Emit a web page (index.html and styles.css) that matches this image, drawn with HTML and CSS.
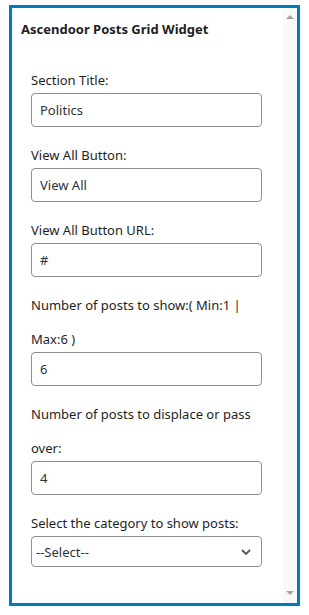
FILE: index.html
```html
<!DOCTYPE html>
<html lang="en">
<head>
    <meta charset="UTF-8">
    <meta name="viewport" content="width=device-width, initial-scale=1.0">
    <title>Ascendoor Posts Grid Widget</title>
    <link rel="stylesheet" href="styles.css">
</head>
<body>
    <div class="widget">
        <div class="content">
            <h3 class="widget-title">Ascendoor Posts Grid Widget</h3>
            <div class="form">
                <div class="field">
                    <label>Section Title:</label>
                    <input type="text" value="Politics">
                </div>
                <div class="field">
                    <label>View All Button:</label>
                    <input type="text" value="View All">
                </div>
                <div class="field">
                    <label>View All Button URL:</label>
                    <input type="text" value="#">
                </div>
                <div class="field">
                    <label>Number of posts to show:( Min:1 | Max:6 )</label>
                    <input type="text" value="6">
                </div>
                <div class="field">
                    <label>Number of posts to displace or pass over:</label>
                    <input type="text" value="4">
                </div>
                <div class="field">
                    <label>Select the category to show posts:</label>
                    <div class="select-box">
                        <span>--Select--</span>
                        <svg width="14" height="14" viewBox="0 0 14 14">
                            <path d="M3 5 L7 9 L11 5" fill="none" stroke="#50575e" stroke-width="1.8"/>
                        </svg>
                    </div>
                </div>
            </div>
        </div>
        <!-- fake scrollbar -->
        <div class="scrollbar">
            <span class="arrow up"></span>
            <span class="arrow down"></span>
        </div>
    </div>
</body>
</html>
```

FILE: styles.css
```css
body {
    margin: 0;
    font-family: 'Noto Sans', 'Open Sans', sans-serif;
    font-size: 13px;
    color: #1e1e1e;
    background: white;
}
.widget {
    display: flex;
    width: 285px;
    height: 595px;
    margin: 5px 0 0 9px;
    border: 3px solid #007cba;
    background: white;
}
.content {
    flex: 1;
    padding: 11px 0 0 9px;
}
.widget-title {
    margin: 0;
    font-size: 13px;
    font-weight: 700;
    line-height: 20px;
}
.form {
    margin-top: 24px;
    padding-left: 10px;
    width: 231px;
}
.field {
    margin-bottom: 11px;
}
.field label {
    display: block;
    line-height: 34px;
    margin-bottom: -4px;
}
.field input {
    display: block;
    box-sizing: border-box;
    width: 231px;
    height: 34px;
    padding: 0 8px;
    border: 1px solid #8c8f94;
    border-radius: 4px;
    font-family: inherit;
    font-size: 13px;
    color: #2c3338;
    background: white;
}
.select-box {
    display: flex;
    align-items: center;
    justify-content: space-between;
    box-sizing: border-box;
    width: 231px;
    height: 31px;
    padding: 0 8px 0 4px;
    border: 1px solid #8c8f94;
    border-radius: 4px;
    color: #2c3338;
}
.scrollbar {
    width: 14px;
    display: flex;
    flex-direction: column;
    justify-content: space-between;
    align-items: center;
    padding: 7px 0 8px;
    background: #f9f9f9;
}
.arrow {
    width: 0;
    height: 0;
    border-left: 4px solid transparent;
    border-right: 4px solid transparent;
}
.arrow.up {
    border-bottom: 4px solid #a3a3a3;
}
.arrow.down {
    border-top: 4px solid #a3a3a3;
}
```
